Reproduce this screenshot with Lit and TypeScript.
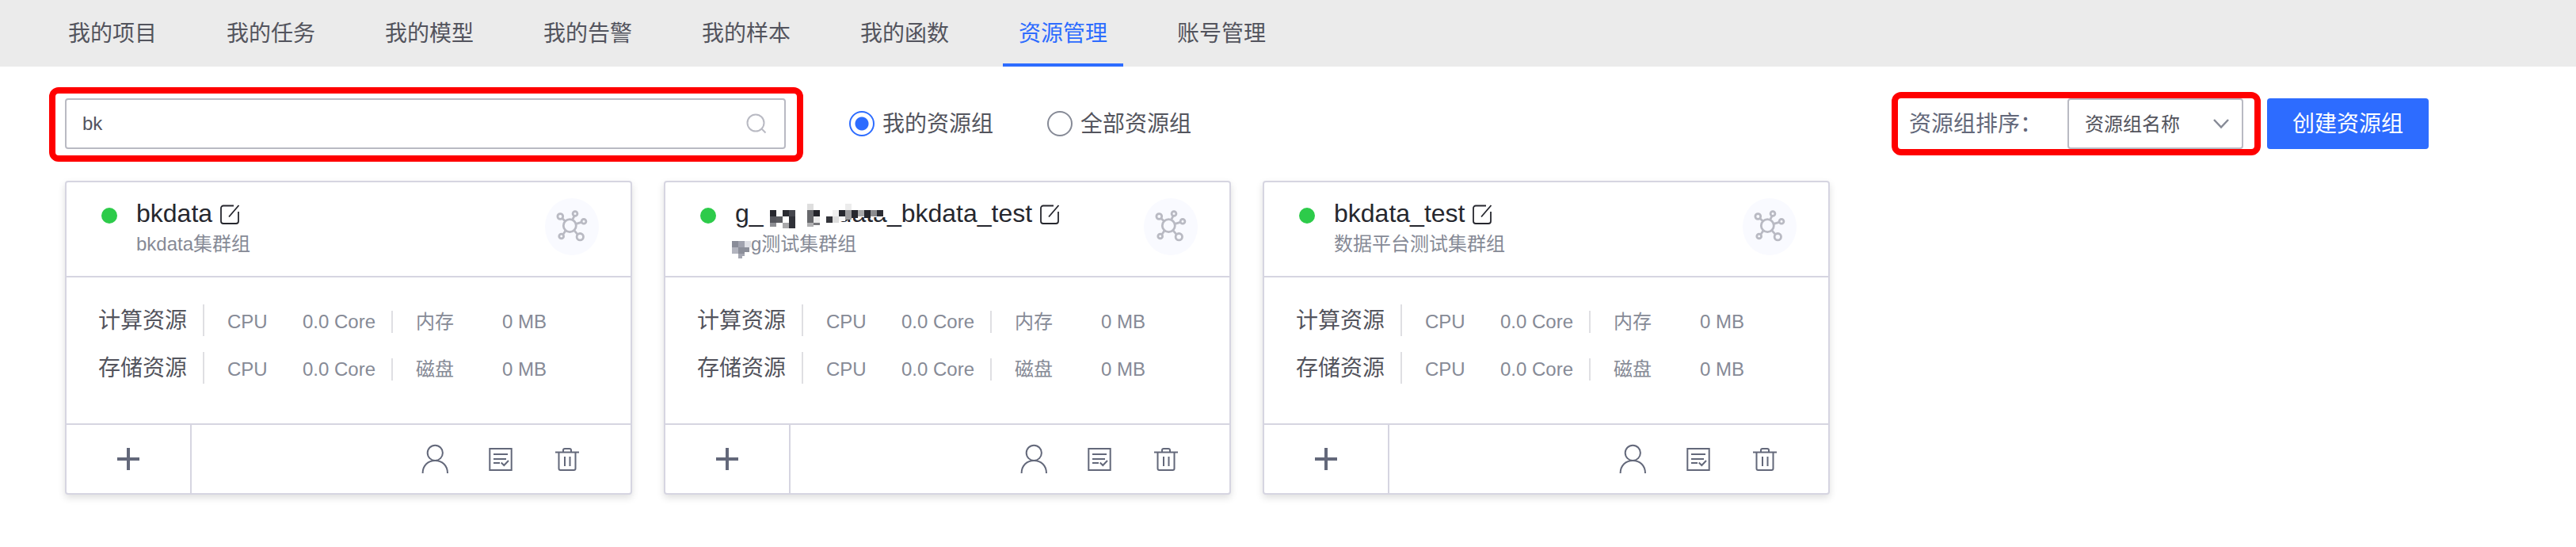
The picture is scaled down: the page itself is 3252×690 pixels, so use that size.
import { LitElement, html, svg, css, nothing } from "lit";
import { customElement, property, state } from "lit/decorators.js";

type Cell = [number, number, number, number, string];

interface ResourceGroup {
  id: string;
  name: string;
  description: string;
  masked?: boolean;
}

const GROUPS: ResourceGroup[] = [
  { id: "bkdata", name: "bkdata", description: "bkdata集群组" },
  { id: "masked", name: "data_bkdata_test", description: "g测试集群组", masked: true },
  { id: "bkdata_test", name: "bkdata_test", description: "数据平台测试集群组" },
];

const TABS = ["我的项目", "我的任务", "我的模型", "我的告警", "我的样本", "我的函数", "资源管理", "账号管理"];

const ROWS = [
  { label: "计算资源", second: "内存" },
  { label: "存储资源", second: "磁盘" },
];

/* Pixelated cells hiding the middle of a name: x, y, width, height, fill */
const NAME_CELLS: Cell[] = [
  [9, 8, 8, 8, "#26272e"], [17, 8, 8, 8, "#fafafa"], [25, 8, 8, 8, "#2a2b31"], [33, 8, 8, 8, "#45464d"],
  [9, 16, 8, 8, "#55565d"], [17, 16, 8, 8, "#5a5b60"], [33, 16, 8, 8, "#303138"],
  [9, 24, 8, 5, "#8e8f94"], [25, 24, 8, 7, "#a8a8aa"], [33, 24, 8, 7, "#303138"],
  [56, 0, 8, 8, "#dedede"], [56, 8, 8, 16, "#67686c"], [56, 24, 8, 5, "#b0b0b2"],
  [64, 8, 8, 8, "#23242a"], [64, 16, 8, 8, "#ebebeb"], [64, 24, 8, 3, "#77787c"],
  [80, 16, 8, 8, "#34353b"], [88, 8, 8, 8, "#f0f0f0"], [88, 16, 8, 8, "#dddddd"],
  [96, 8, 8, 8, "#26272e"], [96, 16, 8, 6, "#f8f8f8"],
  [104, 0, 8, 8, "#ececec"], [104, 8, 8, 12, "#9b9b9d"],
  [112, 8, 8, 10, "#26272e"], [120, 8, 8, 8, "#a8a9ab"], [128, 8, 8, 10, "#26272e"],
  [136, 8, 8, 8, "#8b8c8f"], [144, 8, 8, 8, "#2b2c33"],
];

const NOTE_CELLS: Cell[] = [
  [0, 0, 8, 8, "#898c98"], [8, 0, 8, 8, "#a0a2ae"], [16, 0, 8, 8, "#dfe0e6"],
  [0, 8, 8, 8, "#b2b4be"], [8, 8, 8, 8, "#8c8f9a"], [16, 8, 6, 6, "#8c8f9a"],
  [8, 16, 8, 3, "#a5a7b2"], [8, 19, 5, 3, "#a5a7b2"],
];

const cells = (list: Cell[]) =>
  list.map(([x, y, w, h, fill]) => svg`<rect x=${x} y=${y} width=${w} height=${h} fill=${fill}></rect>`);

const base = css`
  :host {
    display: block;
    font-family: "Liberation Sans", "Noto Sans CJK SC", sans-serif;
  }
  * {
    box-sizing: border-box;
  }
  svg {
    display: block;
    fill: none;
    stroke: currentColor;
  }
  button {
    margin: 0;
    padding: 0;
    border: 0;
    background: none;
    font: inherit;
    color: inherit;
    cursor: pointer;
  }
`;

@customElement("resource-card")
class ResourceCard extends LitElement {
  static styles = [
    base,
    css`
      .card {
        border: 2px solid #d6d5e1;
        border-radius: 4px;
        background: #fff;
        box-shadow: 0 4px 10px rgba(0, 0, 0, 0.13);
      }
      .head {
        display: flex;
        align-items: flex-start;
        height: 120px;
        padding: 20px 40px 0 44px;
        border-bottom: 2px solid #d6d5e1;
      }
      .dot {
        flex: none;
        width: 20px;
        height: 20px;
        margin: 12px 24px 0 0;
        border-radius: 50%;
        background: #2dcb4a;
      }
      .names {
        flex: 1;
        min-width: 0;
        padding-top: 1px;
      }
      .title {
        display: flex;
        align-items: center;
        gap: 10px;
        height: 36px;
        color: #26272e;
      }
      .name {
        position: relative;
        margin: 0;
        font-size: 32px;
        font-weight: 400;
        line-height: 36px;
        white-space: nowrap;
      }
      .hidden-name {
        display: inline-block;
        width: 94px;
      }
      .note {
        position: relative;
        margin: 7px 0 0;
        font-size: 24px;
        line-height: 28px;
        color: #868a96;
        white-space: nowrap;
      }
      .hidden-note {
        display: inline-block;
        width: 20px;
      }
      .mosaic {
        position: absolute;
        stroke: none;
      }
      .name .mosaic {
        left: 35px;
        top: 6px;
      }
      .note .mosaic {
        left: -4px;
        top: 10px;
      }
      .kind {
        flex: none;
        width: 68px;
        height: 72px;
        border-radius: 50%;
        background: #f9faff;
        color: #b9bac3;
      }
      .body {
        display: grid;
        gap: 20px;
        padding: 34px 20px 50px 40px;
      }
      .row {
        display: grid;
        grid-template-columns: 134px 124px 114px 138px 1fr;
        align-items: center;
        font-size: 24px;
        line-height: 28px;
        color: #868a96;
        white-space: nowrap;
      }
      .label {
        height: 40px;
        padding-top: 2px;
        border-right: 2px solid #dfdfe3;
        font-size: 28px;
        line-height: 38px;
        color: #53545d;
      }
      .key,
      .value {
        margin-top: 4px;
      }
      .key {
        padding-left: 29px;
      }
      .split {
        border-right: 2px solid #dfdfe3;
      }
      .foot {
        display: flex;
        height: 88px;
        border-top: 2px solid #d6d5e1;
        color: #63687a;
      }
      .add {
        display: grid;
        place-items: center;
        width: 158px;
        border-right: 2px solid #d6d5e1;
      }
      .tools {
        display: flex;
        margin-left: auto;
        padding-right: 38px;
      }
      .tool {
        display: grid;
        place-items: center;
        width: 84px;
      }
    `,
  ];

  @property({ attribute: false }) group!: ResourceGroup;

  render() {
    const { name, description, masked } = this.group;
    return html`
      <article class="card">
        <header class="head">
          <span class="dot"></span>
          <div class="names">
            <div class="title">
              <h2 class="name">
                ${masked
                  ? html`g_<span class="hidden-name"></span>${name}<svg class="mosaic" width="160" height="32" viewBox="0 0 160 32">
                        <rect x="95" y="0" width="60" height="17" fill="#fff"></rect>
                        ${cells(NAME_CELLS)}
                      </svg>`
                  : name}
              </h2>
              <button aria-label="编辑">
                <svg width="26" height="30" viewBox="0 0 26 30" stroke-width="1.8">
                  <path d="M17 5.5H4a3 3 0 0 0-3 3V25a3 3 0 0 0 3 3H20a3 3 0 0 0 3-3V13M23.5 5L11 19.5" />
                </svg>
              </button>
            </div>
            <p class="note">
              ${masked
                ? html`<span class="hidden-note"></span><svg class="mosaic" width="24" height="24" viewBox="0 0 24 24">${cells(NOTE_CELLS)}</svg>`
                : nothing}${description}
            </p>
          </div>
          <div class="kind">
            <svg width="68" height="72" viewBox="0 0 68 72" stroke-width="2.8">
              <circle cx="31.3" cy="34.7" r="8" />
              <circle cx="19.3" cy="23" r="3.4" />
              <circle cx="38" cy="19.5" r="2.9" />
              <circle cx="49" cy="29.3" r="2.9" />
              <circle cx="20.7" cy="48" r="2.9" />
              <circle cx="44.3" cy="48.7" r="4.2" />
              <path d="M21.8 25.5L25.6 29M37 22.4L34.6 27.4M46 30.4L39.3 32.4M22.8 45.8L26 41M36.8 40.6L41.2 45.6" />
            </svg>
          </div>
        </header>
        <div class="body">
          ${ROWS.map(
            (row) => html`
              <div class="row">
                <span class="label">${row.label}</span>
                <span class="key">CPU</span>
                <span class="value split">0.0 Core</span>
                <span class="key">${row.second}</span>
                <span class="value">0 MB</span>
              </div>
            `
          )}
        </div>
        <footer class="foot">
          <button class="add" aria-label="添加">
            <svg width="28" height="28" viewBox="0 0 28 28" stroke-width="4"><path d="M14 0V28M0 14H28" /></svg>
          </button>
          <div class="tools">
            <button class="tool" aria-label="成员">
              <svg width="40" height="40" viewBox="0 0 40 40" stroke-width="2">
                <circle cx="21.3" cy="12.3" r="9.6" />
                <path d="M5.6 38C5.6 28 12.5 22 21.3 22S37 28 37 38" />
              </svg>
            </button>
            <button class="tool" aria-label="记录">
              <svg width="40" height="40" viewBox="0 0 40 40" stroke-width="2">
                <rect x="6.3" y="7" width="27.4" height="27" />
                <path d="M11 14H29M11 20H27M11 25H19M20.7 24.5L24.3 28L30 22" />
              </svg>
            </button>
            <button class="tool" aria-label="删除">
              <svg width="40" height="40" viewBox="0 0 40 40" stroke-width="2">
                <path d="M5 11.5H35M9.5 11.5V32a2 2 0 0 0 2 2H28.500a2 2 0 0 0 2-2V11.500M15 11V9a2 2 0 0 1 2-2H23a2 2 0 0 1 2 2V11M17 17V29M23.500 17V29" />
              </svg>
            </button>
          </div>
        </footer>
      </article>
    `;
  }
}

@customElement("app-root")
class AppRoot extends LitElement {
  static styles = [
    base,
    css`
      :host {
        min-height: 100vh;
        background: #fff;
        color: #53545d;
      }
      .tabs {
        display: flex;
        gap: 48px;
        padding: 0 66px;
        background: #ebebeb;
      }
      .tab {
        height: 84px;
        padding: 2px 20px 0;
        border-bottom: 4px solid transparent;
        font-size: 28px;
        line-height: 82px;
        color: #53545d;
        text-decoration: none;
        white-space: nowrap;
      }
      .tab.active {
        border-color: #2d6cff;
        color: #2d6cff;
      }
      .page {
        padding: 40px 186px 60px 82px;
      }
      .toolbar {
        display: flex;
        align-items: center;
        height: 64px;
        font-size: 28px;
        line-height: 40px;
        white-space: nowrap;
      }
      .search {
        position: relative;
        display: flex;
        flex: 0 1 910px;
        align-items: center;
        height: 64px;
        padding-right: 22px;
        border: 2px solid #b9bac3;
        border-radius: 4px;
        color: #b9bac3;
      }
      .search::after,
      .sort::after {
        content: "";
        position: absolute;
        border: 8px solid #f00;
        border-radius: 12px;
        pointer-events: none;
      }
      .search::after {
        inset: -16px -24px -18px -22px;
      }
      .search-input {
        flex: 1;
        min-width: 0;
        height: 60px;
        padding: 0 20px;
        border: 0;
        outline: 0;
        background: none;
        font: 24px "Liberation Sans", "Noto Sans CJK SC", sans-serif;
        color: #53545d;
      }
      .scope {
        display: flex;
        gap: 68px;
        margin-left: 80px;
      }
      .option {
        display: flex;
        align-items: center;
        gap: 10px;
        cursor: pointer;
      }
      .caption {
        padding-top: 2px;
      }
      .radio {
        appearance: none;
        width: 32px;
        height: 32px;
        margin: 0;
        border: 2px solid #868a96;
        border-radius: 50%;
        background: #fff;
      }
      .radio:checked {
        border-color: #2d6cff;
        background: radial-gradient(circle, #2d6cff 8px, #fff 9px);
      }
      .sort {
        position: relative;
        display: flex;
        align-items: center;
        gap: 32px;
        margin: 0 30px 0 auto;
        color: #63687a;
      }
      .sort::after {
        inset: -8px -22px -8px -22px;
      }
      .picker {
        display: grid;
        align-items: center;
        color: #868a96;
      }
      .select {
        grid-area: 1 / 1;
        appearance: none;
        width: 222px;
        height: 64px;
        padding: 0 20px;
        border: 2px solid #b9bac3;
        border-radius: 4px;
        background: #fff;
        font: 24px "Liberation Sans", "Noto Sans CJK SC", sans-serif;
        color: #53545d;
      }
      .chevron {
        grid-area: 1 / 1;
        justify-self: end;
        margin-right: 17px;
        pointer-events: none;
      }
      .create {
        height: 64px;
        padding: 2px 32px 0;
        border-radius: 4px;
        background: #2d6cff;
        color: #fff;
      }
      .cards {
        display: grid;
        grid-template-columns: repeat(4, 1fr);
        gap: 40px;
        margin-top: 40px;
      }
    `,
  ];

  @state() private scope = "我的资源组";

  render() {
    return html`
      <nav class="tabs">
        ${TABS.map((tab) => html`<a class="tab ${tab === "资源管理" ? "active" : ""}" href="#">${tab}</a>`)}
      </nav>
      <main class="page">
        <div class="toolbar">
          <div class="search">
            <input class="search-input" type="text" aria-label="搜索资源组" .value=${"bk"} />
            <svg width="26" height="26" viewBox="0 0 26 26" stroke-width="2">
              <circle cx="12" cy="12" r="10.5" />
              <path d="M19.5 19.5L24.5 24.5" />
            </svg>
          </div>
          <div class="scope">
            ${["我的资源组", "全部资源组"].map(
              (option) => html`
                <label class="option">
                  <input
                    class="radio"
                    type="radio"
                    name="scope"
                    .checked=${option === this.scope}
                    @change=${() => (this.scope = option)}
                  />
                  <span class="caption">${option}</span>
                </label>
              `
            )}
          </div>
          <div class="sort">
            <label class="caption" for="sort">资源组排序：</label>
            <div class="picker">
              <select class="select" id="sort">
                <option>资源组名称</option>
              </select>
              <svg class="chevron" width="22" height="14" viewBox="0 0 22 14" stroke-width="2.5">
                <path d="M2 2L11 11.5L20 2" />
              </svg>
            </div>
          </div>
          <button class="create">创建资源组</button>
        </div>
        <section class="cards">
          ${GROUPS.map((group) => html`<resource-card .group=${group}></resource-card>`)}
        </section>
      </main>
    `;
  }
}
